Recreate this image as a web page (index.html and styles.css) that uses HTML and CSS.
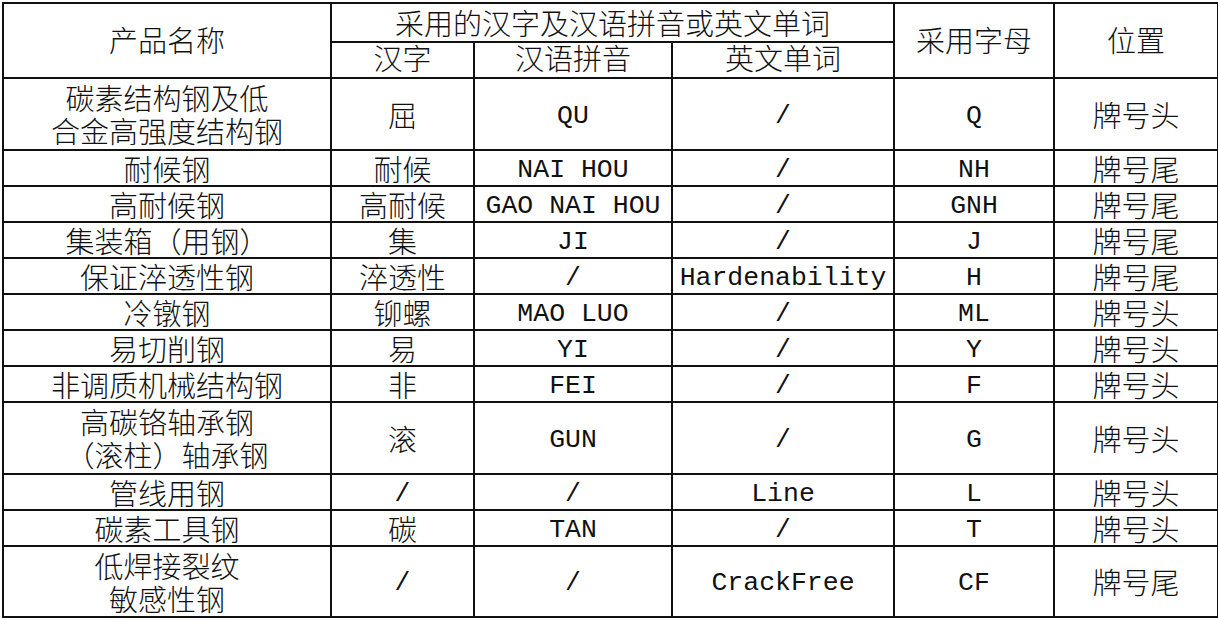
FILE: index.html
```html
<!DOCTYPE html>
<html lang="zh-CN">
<head>
<meta charset="utf-8">
<title>钢材牌号字母</title>
<link rel="stylesheet" href="styles.css">
</head>
<body>
<table class="grid">
  <colgroup>
    <col class="c1"><col class="c2"><col class="c3"><col class="c4"><col class="c5"><col class="c6">
  </colgroup>
  <tbody>
    <tr class="h1">
      <td class="span2" rowspan="2">产品名称</td>
      <td colspan="3">采用的汉字及汉语拼音或英文单词</td>
      <td class="span2" rowspan="2">采用字母</td>
      <td class="span2" rowspan="2">位置</td>
    </tr>
    <tr class="h2">
      <td>汉字</td><td>汉语拼音</td><td>英文单词</td>
    </tr>
    <tr class="tall">
      <td>碳素结构钢及低<br>合金高强度结构钢</td><td>屈</td><td class="en">QU</td><td class="en">/</td><td class="en">Q</td><td>牌号头</td>
    </tr>
    <tr class="row">
      <td>耐候钢</td><td>耐候</td><td class="en">NAI HOU</td><td class="en">/</td><td class="en">NH</td><td>牌号尾</td>
    </tr>
    <tr class="row">
      <td>高耐候钢</td><td>高耐候</td><td class="en">GAO NAI HOU</td><td class="en">/</td><td class="en">GNH</td><td>牌号尾</td>
    </tr>
    <tr class="row">
      <td>集装箱（用钢）</td><td>集</td><td class="en">JI</td><td class="en">/</td><td class="en">J</td><td>牌号尾</td>
    </tr>
    <tr class="row">
      <td>保证淬透性钢</td><td>淬透性</td><td class="en">/</td><td class="en">Hardenability</td><td class="en">H</td><td>牌号尾</td>
    </tr>
    <tr class="row">
      <td>冷镦钢</td><td>铆螺</td><td class="en">MAO LUO</td><td class="en">/</td><td class="en">ML</td><td>牌号头</td>
    </tr>
    <tr class="row">
      <td>易切削钢</td><td>易</td><td class="en">YI</td><td class="en">/</td><td class="en">Y</td><td>牌号头</td>
    </tr>
    <tr class="row">
      <td>非调质机械结构钢</td><td>非</td><td class="en">FEI</td><td class="en">/</td><td class="en">F</td><td>牌号头</td>
    </tr>
    <tr class="tall">
      <td>高碳铬轴承钢<br>（滚柱）轴承钢</td><td>滚</td><td class="en">GUN</td><td class="en">/</td><td class="en">G</td><td>牌号头</td>
    </tr>
    <tr class="row">
      <td>管线用钢</td><td class="en">/</td><td class="en">/</td><td class="en">Line</td><td class="en">L</td><td>牌号头</td>
    </tr>
    <tr class="row">
      <td>碳素工具钢</td><td>碳</td><td class="en">TAN</td><td class="en">/</td><td class="en">T</td><td>牌号头</td>
    </tr>
    <tr class="last">
      <td>低焊接裂纹<br>敏感性钢</td><td class="en">/</td><td class="en">/</td><td class="en">CrackFree</td><td class="en">CF</td><td>牌号尾</td>
    </tr>
  </tbody>
</table>
</body>
</html>
```

FILE: styles.css
```css
html, body {
  margin: 0;
  padding: 0;
  background: #ffffff;
}

body {
  width: 1218px;
  height: 620px;
  overflow: hidden;
  color: #111111;
  font-family: "Noto Sans CJK SC", "Noto Sans", sans-serif;
}

.grid {
  margin: 2px 0 0 2px;
  width: 1215px;
  border-collapse: collapse;
  table-layout: fixed;
}

.c1 { width: 328px; }
.c2 { width: 143px; }
.c3 { width: 198px; }
.c4 { width: 222px; }
.c5 { width: 160px; }
.c6 { width: 164px; }

.grid td {
  border: 2px solid #111111;
  padding: 0;
  text-align: center;
  vertical-align: middle;
  font-size: 29px;
  line-height: 30px;
  font-weight: 300;
  white-space: nowrap;
}

/* header rows */
.h1 td { height: 35px; line-height: 28px; padding-bottom: 2px; }
.h1 td.span2 { height: auto; padding-bottom: 4px; }
.h2 td { height: 28px; line-height: 26px; padding-bottom: 6px; }

/* body rows: pitch = height + padding + 2 */
.row td { height: 33px; padding-bottom: 1px; }
.tall td { height: 70px; line-height: 33px; }
.last td { height: 69px; line-height: 33px; }

.grid td.en {
  font-family: "Liberation Mono", "DejaVu Sans Mono", monospace;
  font-size: 26.5px;
  font-weight: 400;
  line-height: 27px;
  padding-top: 4px;
  padding-bottom: 0;
}
.row td.en { height: 30px; }
.tall td.en { height: 66px; }
.last td.en { height: 65px; }
```
